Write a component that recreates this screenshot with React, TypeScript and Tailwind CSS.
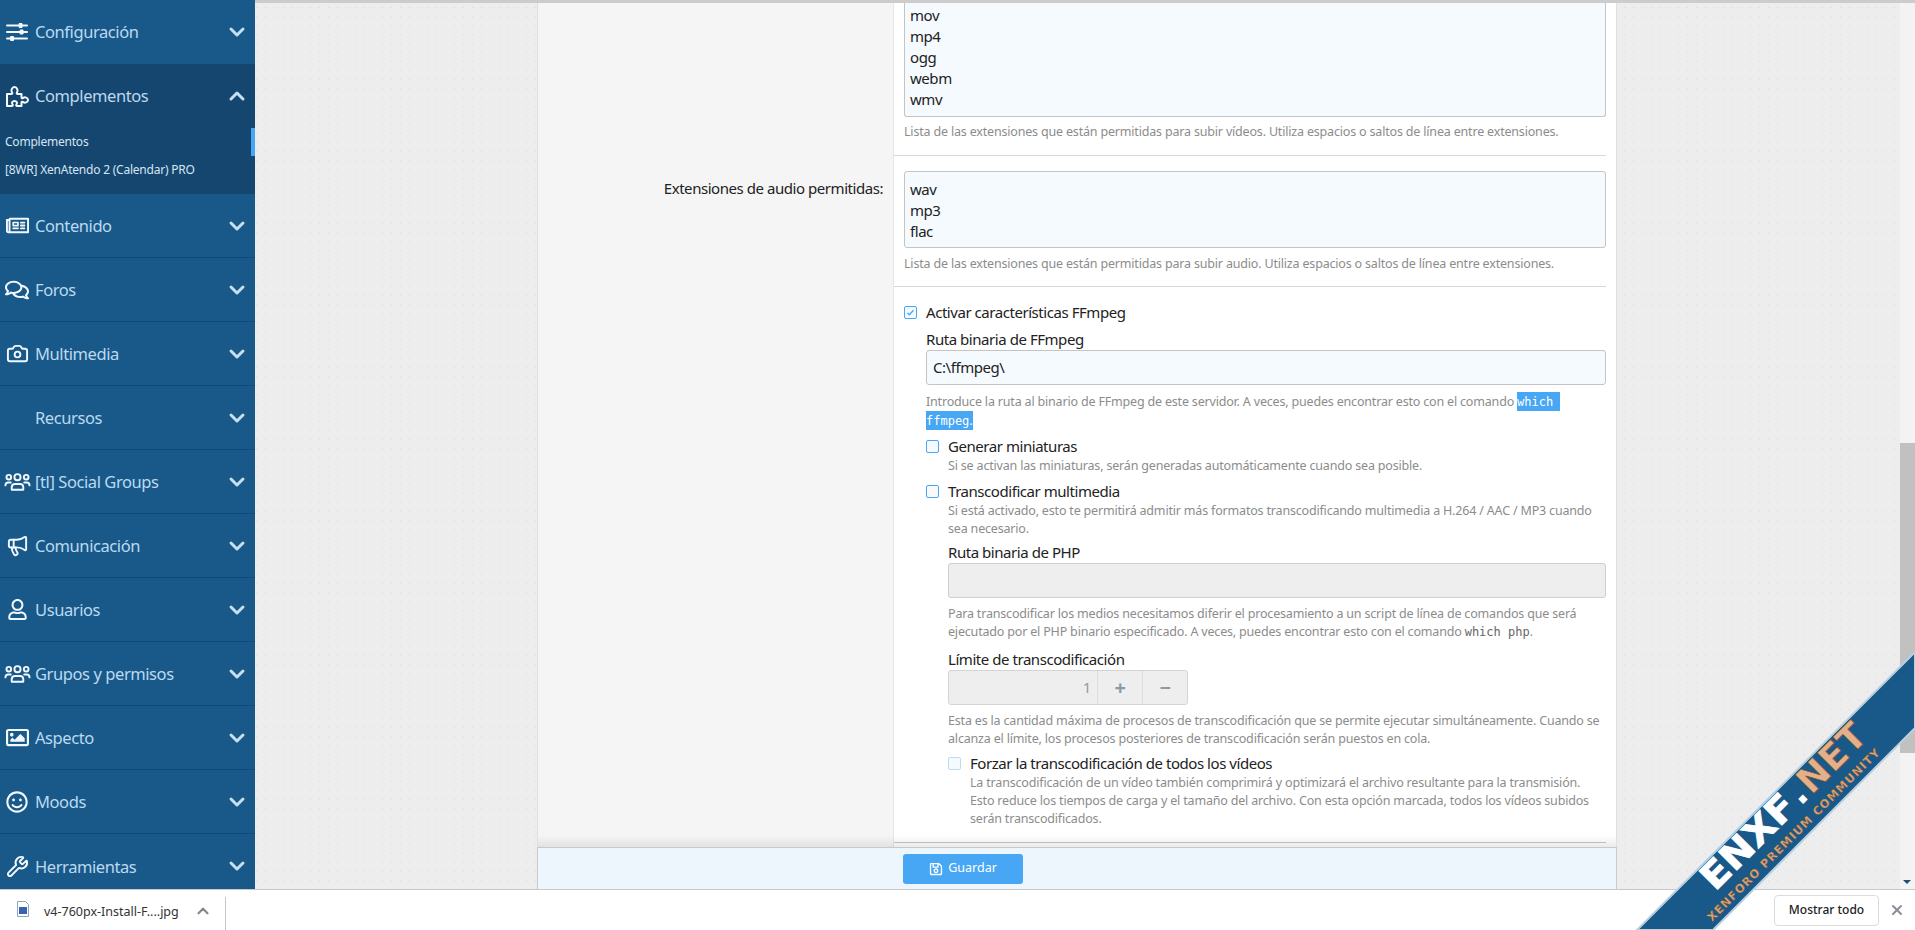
import React from "react";
import { ChevronDown, ChevronUp, X, Camera, Megaphone, Wrench } from "lucide-react";
import { FaRegComments, FaRegImage, FaRegNewspaper, FaRegSmile, FaRegUser, FaRegSave } from "react-icons/fa";

const W = "#f2f8fc";
const Ic = ({ children }: { children: React.ReactNode }) => (
  <svg viewBox="0 0 24 24" className="w-[24px] h-[24px]" fill="none" stroke={W} strokeWidth="2" strokeLinecap="round" strokeLinejoin="round">{children}</svg>
);
const Sliders = () => (
  <Ic><path d="M2 5.500h20M2 12h20M2 18.500h20" /><rect x="14.500" y="3.500" width="2.500" height="4" fill={W} strokeWidth="1" /><rect x="15.500" y="10" width="2.500" height="4" fill={W} strokeWidth="1" /><rect x="6" y="16.500" width="2.500" height="4" fill={W} strokeWidth="1" /></Ic>
);
const Puzzle = () => (
  <Ic><path d="M2 10h4.500c1 0 1-1 .4-1.800C5.800 6.800 6.800 3 9.500 3s3.700 3.800 2.600 5.200c-.6.8-.6 1.800.4 1.800h4v3.500c0 1 1 1 1.800.4 1.400-1.100 4.700-.4 4.700 2.100s-3.300 3.200-4.700 2.100c-.8-.6-1.800-.6-1.800.4V22H12c-1 0-1-1-.4-1.800 1-1.400 0-3.200-2.100-3.200s-3.100 1.800-2.100 3.200c.6.8.6 1.800-.4 1.800H2z" /></Ic>
);
const Users3 = () => (
  <svg viewBox="0 0 28 24" className="w-[27px] h-[24px] shrink-0" fill="none" stroke={W} strokeWidth="2" strokeLinecap="round" strokeLinejoin="round"><circle cx="14" cy="7" r="3.200" /><circle cx="5" cy="7" r="2.400" /><circle cx="23" cy="7" r="2.400" /><path d="M8 20v-2.500c0-2 1.500-3.500 3.500-3.500h5c2 0 3.500 1.500 3.500 3.500V20zM1.500 15.500c0-1.800 1.200-3 3-3H7M26.500 15.500c0-1.800-1.200-3-3-3H21" /></svg>
);
const Fa = ({ I, size = 22 }: { I: React.ComponentType<{ size?: number; color?: string }>; size?: number }) => <I size={size} color={W} />;

type Item = { label: string; icon?: React.ReactNode };
const items: Item[] = [
  { label: "Contenido", icon: <Fa I={FaRegNewspaper} size={23} /> },
  { label: "Foros", icon: <Fa I={FaRegComments} size={24} /> },
  { label: "Multimedia", icon: <Camera size={23} color={W} strokeWidth={2} /> },
  { label: "Recursos" },
  { label: "[tl] Social Groups", icon: <Users3 /> },
  { label: "Comunicación", icon: <Megaphone size={23} color={W} strokeWidth={2} /> },
  { label: "Usuarios", icon: <Fa I={FaRegUser} size={21} /> },
  { label: "Grupos y permisos", icon: <Users3 /> },
  { label: "Aspecto", icon: <Fa I={FaRegImage} size={23} /> },
  { label: "Moods", icon: <Fa I={FaRegSmile} size={22} /> },
  { label: "Herramientas", icon: <Wrench size={23} color={W} strokeWidth={2} /> },
];

const Row = ({ label, icon, up, last, low }: Item & { up?: boolean; last?: boolean; low?: boolean }) => (
  <div className={`flex items-center h-[64px] shrink-0 pl-[3px] pr-[6px] ${last ? "" : "border-b border-[#124a73]"}`}>
    <span className="w-[28px] mr-[4px] flex justify-center shrink-0">{icon}</span>
    <span className={`text-[16.500px] text-[#bcd9ef] flex-1 tracking-[-0.42px] ${low ? "pt-[2px]" : ""}`}>{label}</span>
    {up ? <ChevronUp size={24} color="#c6e0f3" strokeWidth={3} /> : <ChevronDown size={24} color="#c6e0f3" strokeWidth={3} />}
  </div>
);

const Hint = ({ children, className = "" }: { children: React.ReactNode; className?: string }) => (
  <div className={`text-[12.500px] leading-[18px] text-[#8c8c8c] tracking-[-0.18px] ${className}`}>{children}</div>
);
const Box = ({ on, dim }: { on?: boolean; dim?: boolean }) => (
  <span className={`w-[13px] h-[13px] shrink-0 rounded-[2px] border flex items-center justify-center bg-[#f5faff] ${dim ? "border-[#bcdcf5]" : "border-[#47a7f5]"}`}>
    {on && <svg viewBox="0 0 12 12" className="w-[9px] h-[9px]" fill="none" stroke="#47a7f5" strokeWidth="1.8"><path d="M2 6.500l2.500 2.500L10 3" /></svg>}
  </span>
);
const Mono = "font-['DejaVu_Sans_Mono','Liberation_Mono',monospace] text-[12px] tracking-normal leading-[14px]";
const dots = "bg-[radial-gradient(#dcdcdc_0.7px,transparent_0.8px)] bg-[length:9px_9px]";

export default function App() {
  return (
    <div className="relative w-[1915px] h-[930px] overflow-hidden flex flex-col bg-white font-['Noto_Sans',sans-serif]">
      <div className={`flex flex-1 min-h-0 bg-[#ededed] border-t-[3px] border-[#cccccc] ${dots}`}>
        <aside className="w-[255px] shrink-0 bg-[#18598a] flex flex-col -mt-[3px]">
          <Row label="Configuración" icon={<Sliders />} last />
          <div className="bg-[#15466f] h-[130px] shrink-0">
            <Row label="Complementos" icon={<Puzzle />} up last />
            <div className="text-[12px] text-[#d4e5f2] tracking-[-0.22px]">
              <div className="h-[28px] pl-[5px] flex items-center border-r-[4px] border-[#47a7f5]">Complementos</div>
              <div className="h-[28px] pl-[5px] flex items-center">[8WR] XenAtendo 2 (Calendar) PRO</div>
            </div>
          </div>
          {items.map((it, i) => <Row key={it.label} {...it} low last={i === items.length - 1} />)}
        </aside>

        <main className="flex-1 min-w-0 flex">
          <div className="flex-1 min-w-0 pl-[282px] pr-[283px] flex flex-col">
            <div className="flex-1 min-h-0 flex bg-white border-x border-[#dfdfdf] overflow-hidden">
              <div className="w-[356px] shrink-0 bg-[#f5f5f5] border-r border-[#e6e6e6] text-right pr-[10px] text-[#222] text-[15px] tracking-[-0.45px]">
                <div className="pt-[175px] leading-[21px]">Extensiones de audio permitidas:</div>
              </div>
              <div className="flex-1 min-w-0 pl-[10px] pr-[10px] text-[15px] text-[#222] tracking-[-0.45px] leading-[21px]">
                <div className="-mt-[10px] h-[124px] pt-[12px] px-[5px] border border-t-0 border-[#c4c4c4] rounded-b-[3px] bg-[#f5faff]">
                  <div>mov</div><div>mp4</div><div>ogg</div><div>webm</div><div>wmv</div>
                </div>
                <Hint className="mt-[6px]">Lista de las extensiones que están permitidas para subir vídeos. Utiliza espacios o saltos de línea entre extensiones.</Hint>
                <div className="border-t border-[#d8d8d8] -ml-[10px] mt-[14px]" />
                <div className="mt-[15px] h-[77px] pt-[7px] px-[5px] border border-[#c4c4c4] rounded-[3px] bg-[#f5faff]">
                  <div>wav</div><div>mp3</div><div>flac</div>
                </div>
                <Hint className="mt-[7px]">Lista de las extensiones que están permitidas para subir audio. Utiliza espacios o saltos de línea entre extensiones.</Hint>
                <div className="border-t border-[#d8d8d8] -ml-[10px] mt-[13px]" />
                <div className="flex items-center gap-[9px] mt-[15px]"><Box on /><span>Activar características FFmpeg</span></div>
                <div className="pl-[22px]">
                  <div className="mt-[6px]">Ruta binaria de FFmpeg</div>
                  <div className="h-[35px] px-[6px] flex items-center border border-[#c4c4c4] rounded-[3px] bg-[#f5faff]">C:\ffmpeg\</div>
                  <Hint className="mt-[7px] leading-[19px] tracking-[-0.05px]">Introduce la ruta al binario de FFmpeg de este servidor. A veces, puedes encontrar esto con el comando <span className="bg-[#47a7f5] text-white py-[1px]"><span className={Mono}>which{"\u00a0"}<wbr />ffmpeg</span>.</span></Hint>
                  <div className="flex items-center gap-[9px] mt-[6px]"><Box /><span>Generar miniaturas</span></div>
                  <Hint className="pl-[22px]">Si se activan las miniaturas, serán generadas automáticamente cuando sea posible.</Hint>
                  <div className="flex items-center gap-[9px] mt-[6px]"><Box /><span>Transcodificar multimedia</span></div>
                  <div className="pl-[22px]">
                    <Hint>Si está activado, esto te permitirá admitir más formatos transcodificando multimedia a H.264 / AAC / MP3 cuando sea necesario.</Hint>
                    <div className="mt-[4px]">Ruta binaria de PHP</div>
                    <div className="h-[35px] border border-[#cfcfcf] rounded-[3px] bg-[#eeeeee]" />
                    <Hint className="mt-[7px]">Para transcodificar los medios necesitamos diferir el procesamiento a un script de línea de comandos que será ejecutado por el PHP binario especificado. A veces, puedes encontrar esto con el comando <span className={`${Mono} text-[#666]`}>which php</span>.</Hint>
                    <div className="mt-[8px]">Límite de transcodificación</div>
                    <div className="w-[240px] h-[35px] flex border border-[#d4d4d4] rounded-[3px] bg-[#eeeeee] text-[#999] text-center">
                      <span className="flex-1 flex items-center justify-end pr-[6px]">1</span>
                      <span className="w-[45px] border-l border-[#dcdcdc] flex items-center justify-center text-[#8a9aa6] text-[20px] font-bold">+</span>
                      <span className="w-[45px] border-l border-[#dcdcdc] flex items-center justify-center text-[#8a9aa6] text-[20px] font-bold">−</span>
                    </div>
                    <Hint className="mt-[7px]">Esta es la cantidad máxima de procesos de transcodificación que se permite ejecutar simultáneamente. Cuando se alcanza el límite, los procesos posteriores de transcodificación serán puestos en cola.</Hint>
                    <div className="flex items-center gap-[9px] mt-[5px]"><Box dim /><span>Forzar la transcodificación de todos los vídeos</span></div>
                    <Hint className="pl-[22px]">La transcodificación de un vídeo también comprimirá y optimizará el archivo resultante para la transmisión. Esto reduce los tiempos de carga y el tamaño del archivo. Con esta opción marcada, todos los vídeos subidos serán transcodificados.</Hint>
                  </div>
                </div>
                <div className="border-t border-[#c8c8c8] -ml-[10px] mt-[14px]" />
              </div>
            </div>
            <div className="relative h-[42px] shrink-0 flex items-center bg-[#edf6fd] border-x border-t border-[#c9c9c9] pl-[365px]">
              <div className="absolute left-0 right-0 -top-[13px] h-[12px] bg-gradient-to-t from-[#00000014] to-transparent" />
              <button className="w-[120px] h-[30px] rounded-[3px] bg-[#47a7f5] text-white text-[12.500px] flex items-center justify-center gap-[5px]"><FaRegSave size={14} />Guardar</button>
            </div>
          </div>
          <div className="w-[15px] shrink-0 bg-[#f3f3f3] relative">
            <div className="absolute left-0 right-0 top-[440px] h-[310px] bg-[#c1c1c1]" />
            <div className="absolute left-[3px] bottom-[5px] w-0 h-0 border-x-[4px] border-x-transparent border-t-[4px] border-t-[#1e4d78]" />
          </div>
        </main>
      </div>

      <div className="h-[41px] shrink-0 bg-white border-t border-[#c9c9c9] flex items-center relative text-[12.500px] text-[#333]">
        <div className="w-[226px] h-[34px] mt-[7px] border-r border-[#c6c6c6] flex items-center pl-[17px] shrink-0">
          <svg viewBox="0 0 12 16" className="w-[12px] h-[16px] -mt-[10px]"><path d="M.5.5h8l3 3v12H.5z" fill="#fff" stroke="#8fa6c2" /><rect x="2" y="6" width="8" height="7" fill="#3a62b0" /></svg>
          <span className="ml-[15px] -mt-[3px]">v4-760px-Install-F....jpg</span>
          <ChevronUp size={18} color="#888" strokeWidth={3} className="ml-[15px] -mt-[5px]" />
        </div>
        <div className="flex-1" />
        <button className="w-[105px] h-[31px] border border-[#dadce0] rounded-[4px] text-[12px] font-medium text-[#202124]">Mostrar todo</button>
        <X size={16} color="#8a8f96" strokeWidth={3} className="ml-[10px] mr-[10px]" />
      </div>

      <svg className="absolute inset-0 pointer-events-none" width="1915" height="930" viewBox="0 0 1915 930">
        <polygon points="1637,930 1915,652 1915,728 1713,930" fill="#18598a" stroke="#b9cfdf" strokeWidth="2" />
        <g transform="translate(1715,892) rotate(-45)" fontFamily="'DejaVu Sans',sans-serif" fontWeight="bold">
          <text x="0" y="0" fontSize="36" fill="#ffffff" stroke="#ffffff" strokeWidth="0.8" textLength="118" lengthAdjust="spacingAndGlyphs">ENXF</text>
          <text x="121" y="0" fontSize="36" fill="#ffffff">.</text>
          <text x="136" y="0" fontSize="36" fill="#e2b18c" stroke="#7a4a20" strokeWidth="0.6" textLength="82" lengthAdjust="spacingAndGlyphs">NET</text>
        </g>
        <g transform="translate(1712,922) rotate(-45)" fontFamily="'DejaVu Sans',sans-serif" fontWeight="bold">
          <text x="0" y="0" fontSize="11.500" fill="#dca57a" stroke="#8a5420" strokeWidth="0.4" textLength="238" lengthAdjust="spacing">XENFORO PREMIUM COMMUNITY</text>
        </g>
      </svg>
    </div>
  );
}
